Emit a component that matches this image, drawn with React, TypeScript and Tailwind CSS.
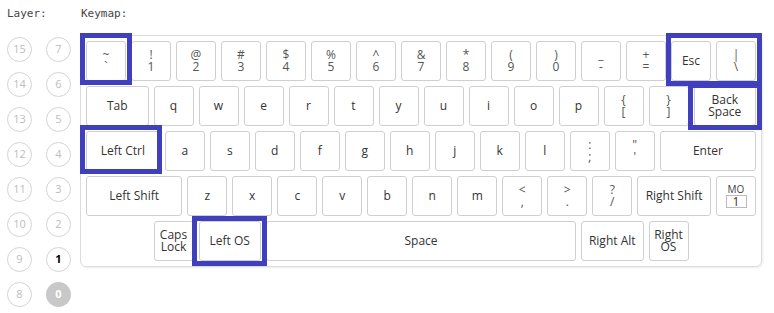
import React from "react";

type Key = { label?: string; top?: string; bottom?: string; u?: number; spacer?: boolean; mo?: boolean };

const widths: Record<string, string> = {
  "1": "w-[40px]",
  "1.5": "w-[62.5px]",
  "1.75": "w-[73.75px]",
  "2.25": "w-[96.25px]",
  "7": "w-[310px]",
};

const letters = (s: string): Key[] => s.split("").map((c) => ({ label: c }));

const rows: Key[][] = [
  [
    { top: "~", bottom: "`" },
    { top: "!", bottom: "1" },
    { top: "@", bottom: "2" },
    { top: "#", bottom: "3" },
    { top: "$", bottom: "4" },
    { top: "%", bottom: "5" },
    { top: "^", bottom: "6" },
    { top: "&", bottom: "7" },
    { top: "*", bottom: "8" },
    { top: "(", bottom: "9" },
    { top: ")", bottom: "0" },
    { top: "_", bottom: "-" },
    { top: "+", bottom: "=" },
    { label: "Esc" },
    { top: "|", bottom: "\\" },
  ],
  [
    { label: "Tab", u: 1.5 },
    ...letters("qwertyuiop"),
    { top: "{", bottom: "[" },
    { top: "}", bottom: "]" },
    { top: "Back", bottom: "Space", u: 1.5 },
  ],
  [
    { label: "Left Ctrl", u: 1.75 },
    ...letters("asdfghjkl"),
    { top: ":", bottom: ";" },
    { top: "\"", bottom: "'" },
    { label: "Enter", u: 2.25 },
  ],
  [
    { label: "Left Shift", u: 2.25 },
    ...letters("zxcvbnm"),
    { top: "<", bottom: "," },
    { top: ">", bottom: "." },
    { top: "?", bottom: "/" },
    { label: "Right Shift", u: 1.75 },
    { mo: true },
  ],
  [
    { spacer: true, u: 1.5 },
    { top: "Caps", bottom: "Lock" },
    { label: "Left OS", u: 1.5 },
    { label: "Space", u: 7 },
    { label: "Right Alt", u: 1.5 },
    { top: "Right", bottom: "OS" },
    { spacer: true, u: 1.5 },
  ],
];

const layers = [
  [15, 7],
  [14, 6],
  [13, 5],
  [12, 4],
  [11, 3],
  [10, 2],
  [9, 1],
  [8, 0],
];

function KeyCap({ k }: { k: Key }) {
  const w = widths[String(k.u ?? 1)];
  if (k.spacer) return <div className={`${w} h-[40px] shrink-0`} />;
  const twoWords = k.top && k.top.length > 1;
  return (
    <div className={`${w} h-[40px] shrink-0 bg-white border border-[#cfcfcf] rounded-[3px] flex flex-col items-center justify-center text-[12px]`}>
      {k.mo ? (
        <>
          <div className="text-[10px] leading-[10px] text-[#444]">MO</div>
          <div className="mt-[1px] w-[21px] h-[13px] border border-[#bbb] flex items-center justify-center text-[12px] leading-none text-[#333]">1</div>
        </>
      ) : k.label ? (
        <span className="text-[#333]">{k.label}</span>
      ) : twoWords ? (
        <>
          <span className="leading-[12px] text-[#333]">{k.top}</span>
          <span className="leading-[12px] text-[#333]">{k.bottom}</span>
        </>
      ) : (
        <>
          <span className="leading-[12px] text-[#555]">{k.top}</span>
          <span className="leading-[12px] text-[#555]">{k.bottom}</span>
        </>
      )}
    </div>
  );
}

export default function App() {
  return (
    <div className="w-[774px] h-[313px] bg-white flex overflow-hidden" style={{ fontFamily: "'Open Sans', 'Noto Sans', sans-serif" }}>
      <div className="w-[80px] shrink-0 pl-[7px] pt-[7px]">
        <div className="h-[14px] leading-[14px] text-[11px] text-[#444]" style={{ fontFamily: "'DejaVu Sans Mono', monospace" }}>Layer:</div>
        <div className="mt-[16px] grid grid-cols-[25px_25px] gap-x-[14px] gap-y-[10px]">
          {layers.flat().map((n) => (
            <div
              key={n}
              className={
                n === 0
                  ? "w-[25px] h-[25px] rounded-full bg-[#c8c8c8] flex items-center justify-center text-[11px] font-bold text-white"
                  : n === 1
                  ? "w-[25px] h-[25px] rounded-full border border-[#d4d4d4] flex items-center justify-center text-[11px] font-bold text-black"
                  : "w-[25px] h-[25px] rounded-full border border-[#d4d4d4] flex items-center justify-center text-[11px] text-[#bdbdbd]"
              }
            >
              {n}
            </div>
          ))}
        </div>
      </div>
      <div className="pt-[7px]">
        <div className="h-[14px] leading-[14px] pl-[1px] text-[11px] text-[#444]" style={{ fontFamily: "'DejaVu Sans Mono', monospace" }}>Keymap:</div>
        <div className="relative mt-[14px] w-[682px] border border-[#dcdcdc] rounded-[6px] p-[5px] flex flex-col gap-[5px] shadow-[1px_1px_2px_rgba(0,0,0,0.08)]">
          {rows.map((row, i) => (
            <div key={i} className="flex gap-[5px]">
              {row.map((k, j) => (
                <KeyCap key={j} k={k} />
              ))}
            </div>
          ))}
          <div className="absolute left-[-1px] top-[-3px] w-[52px] h-[52px] border-[5px] border-[#4040bf]" />
          <div className="absolute left-[585px] top-[-3px] w-[96px] h-[53px] border-[5px] border-[#4040bf]" />
          <div className="absolute left-[607px] top-[47px] w-[74px] h-[47px] border-[5px] border-[#4040bf]" />
          <div className="absolute left-[-1px] top-[89px] w-[82px] h-[49px] border-[5px] border-[#4040bf]" />
          <div className="absolute left-[111px] top-[180px] w-[75px] h-[50px] border-[5px] border-[#4040bf]" />
        </div>
      </div>
    </div>
  );
}
